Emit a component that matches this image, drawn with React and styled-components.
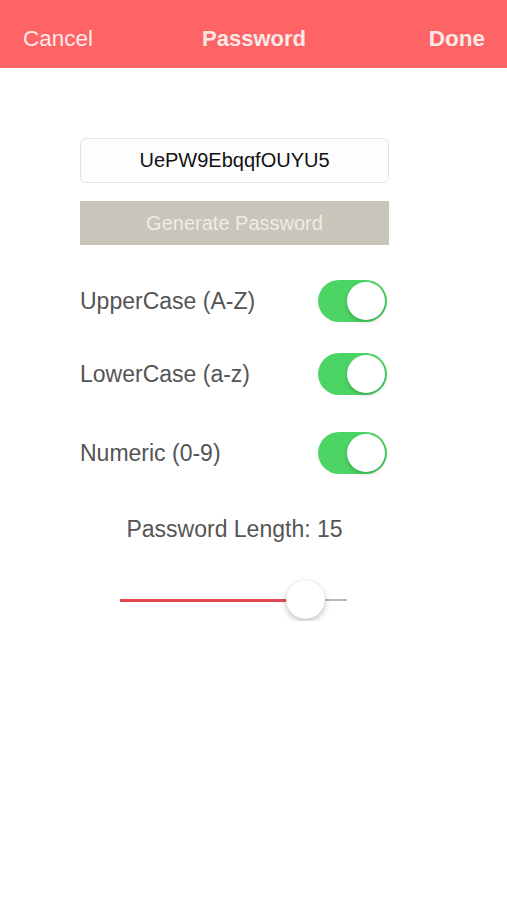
import React from 'react';
import styled, { createGlobalStyle } from 'styled-components';

const GlobalStyle = createGlobalStyle`
  body {
    margin: 0;
    background: #ffffff;
    font-family: "Liberation Sans", Arial, sans-serif;
  }
`;

const NavBar = styled.div`
  height: 68px;
  background: #fe6466;
  display: grid;
  grid-template-columns: 1fr auto 1fr;
  align-items: center;
  padding: 10px 22px 0 23px;
  box-sizing: border-box;
`;

const NavButton = styled.span`
  color: #fde8e8;
  font-size: 22.5px;
  font-weight: ${p => (p.bold ? 700 : 400)};
  justify-self: ${p => p.align};
`;

const NavTitle = styled.span`
  color: #fde8e8;
  font-size: 22px;
  font-weight: 700;
`;

const Content = styled.div`
  width: 309px;
  margin-left: 80px;
  padding-top: 70px;
  display: flex;
  flex-direction: column;
`;

const PasswordBox = styled.div`
  height: 45px;
  box-sizing: border-box;
  border: 1px solid #e4e4e4;
  border-radius: 6px;
  background: #fdfdfd;
  display: flex;
  align-items: center;
  justify-content: center;
  font-size: 20px;
  color: #111;
`;

const GenerateButton = styled.div`
  margin-top: 18px;
  height: 44px;
  background: #c9c5ba;
  color: #eeece7;
  font-size: 20px;
  display: flex;
  align-items: center;
  justify-content: center;
`;

const OptionRow = styled.div`
  margin-top: ${p => p.gap}px;
  height: 42px;
  display: flex;
  align-items: center;
  justify-content: space-between;
`;

const Label = styled.span`
  font-size: 23px;
  color: #555;
`;

const Switch = styled.div`
  width: 69px;
  height: 42px;
  margin-right: 2px;
  border-radius: 21px;
  background: #4cd465;
  position: relative;
`;

const Knob = styled.div`
  position: absolute;
  top: 2px;
  right: 2px;
  width: 38px;
  height: 38px;
  border-radius: 50%;
  background: #fff;
  box-shadow: 0 2px 4px rgba(0, 0, 0, 0.2);
`;

const LengthLabel = styled.div`
  margin-top: 42px;
  text-align: center;
  font-size: 23px;
  color: #555;
`;

const SliderTrack = styled.div`
  margin: 36px 0 0 40px;
  width: 227px;
  height: 42px;
  position: relative;
  display: flex;
  align-items: center;
`;

const TrackLine = styled.div`
  height: 2px;
  width: 100%;
  background: #b8b8b8;
`;

const TrackFill = styled.div`
  position: absolute;
  left: 0;
  height: 3px;
  background: #e4484f;
`;

const Thumb = styled.div`
  position: absolute;
  top: 1px;
  width: 39px;
  height: 39px;
  margin-left: -19px;
  border-radius: 50%;
  background: #fff;
  box-shadow: 0 3px 6px rgba(0, 0, 0, 0.22), 0 0 1px rgba(0, 0, 0, 0.2);
`;

const options = [
  { label: 'UpperCase (A-Z)', gap: 35 },
  { label: 'LowerCase (a-z)', gap: 31 },
  { label: 'Numeric (0-9)', gap: 37 },
];

function App() {
  const ratio = 0.815;
  return (
    <>
      <GlobalStyle />
      <NavBar>
        <NavButton align="start">Cancel</NavButton>
        <NavTitle>Password</NavTitle>
        <NavButton bold align="end">Done</NavButton>
      </NavBar>
      <Content>
        <PasswordBox>UePW9EbqqfOUYU5</PasswordBox>
        <GenerateButton>Generate Password</GenerateButton>
        {options.map(o => (
          <OptionRow key={o.label} gap={o.gap}>
            <Label>{o.label}</Label>
            <Switch>
              <Knob />
            </Switch>
          </OptionRow>
        ))}
        <LengthLabel>Password Length: 15</LengthLabel>
        <SliderTrack>
          <TrackLine />
          <TrackFill style={{ width: `${ratio * 100}%` }} />
          <Thumb style={{ left: `${ratio * 100}%` }} />
        </SliderTrack>
      </Content>
    </>
  );
}

export default App;
